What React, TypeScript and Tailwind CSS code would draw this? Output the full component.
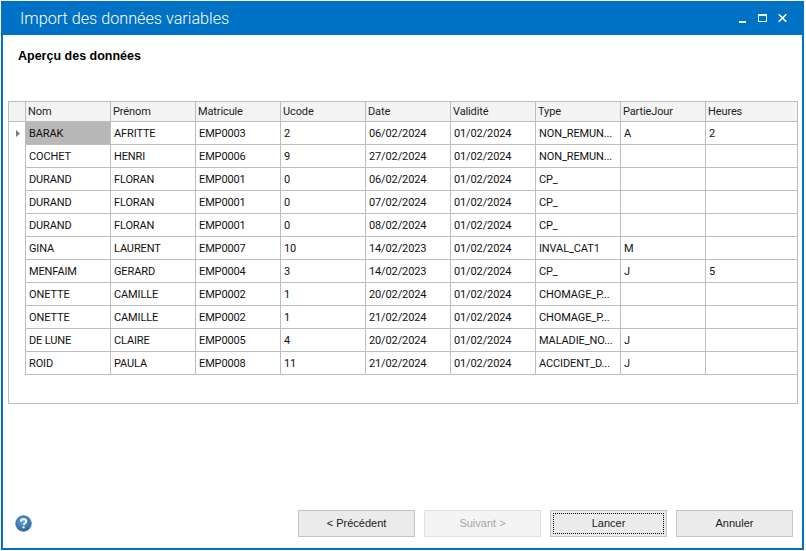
const columns = ["Nom", "Prénom", "Matricule", "Ucode", "Date", "Validité", "Type", "PartieJour", "Heures"];

const rows = [
  ["BARAK", "AFRITTE", "EMP0003", "2", "06/02/2024", "01/02/2024", "NON_REMUN...", "A", "2"],
  ["COCHET", "HENRI", "EMP0006", "9", "27/02/2024", "01/02/2024", "NON_REMUN...", "", ""],
  ["DURAND", "FLORAN", "EMP0001", "0", "06/02/2024", "01/02/2024", "CP_", "", ""],
  ["DURAND", "FLORAN", "EMP0001", "0", "07/02/2024", "01/02/2024", "CP_", "", ""],
  ["DURAND", "FLORAN", "EMP0001", "0", "08/02/2024", "01/02/2024", "CP_", "", ""],
  ["GINA", "LAURENT", "EMP0007", "10", "14/02/2023", "01/02/2024", "INVAL_CAT1", "M", ""],
  ["MENFAIM", "GERARD", "EMP0004", "3", "14/02/2023", "01/02/2024", "CP_", "J", "5"],
  ["ONETTE", "CAMILLE", "EMP0002", "1", "20/02/2024", "01/02/2024", "CHOMAGE_P...", "", ""],
  ["ONETTE", "CAMILLE", "EMP0002", "1", "21/02/2024", "01/02/2024", "CHOMAGE_P...", "", ""],
  ["DE LUNE", "CLAIRE", "EMP0005", "4", "20/02/2024", "01/02/2024", "MALADIE_NO...", "J", ""],
  ["ROID", "PAULA", "EMP0008", "11", "21/02/2024", "01/02/2024", "ACCIDENT_D...", "J", ""],
];

function HelpIcon() {
  return (
    <svg width="17" height="17" viewBox="0 0 17 17">
      <defs>
        <radialGradient id="help" cx="45%" cy="35%" r="70%">
          <stop offset="0%" stopColor="#6fa8dc" />
          <stop offset="100%" stopColor="#1d5f9c" />
        </radialGradient>
      </defs>
      <circle cx="8.5" cy="8.5" r="7.7" fill="url(#help)" stroke="#3d6f99" strokeWidth="1" />
      <path
        d="M5.9 6.6c0-1.5 1.1-2.4 2.7-2.4s2.6.9 2.6 2.1c0 1-.6 1.5-1.3 2-.6.4-.9.7-.9 1.4v.3"
        fill="none"
        stroke="#fff"
        strokeWidth="1.9"
      />
      <rect x="7.5" y="11.3" width="2" height="2" fill="#fff" />
    </svg>
  );
}

function WizardButton({ label, disabled, focused }: { label: string; disabled?: boolean; focused?: boolean }) {
  return (
    <button
      disabled={disabled}
      className={
        disabled
          ? "w-[117px] h-[27px] border border-[#e0e0e0] bg-[#f4f4f4] text-[#a8a8a8] text-[11px] flex items-center justify-center"
          : "w-[117px] h-[27px] border border-[#c4c4c4] bg-[#ebebeb] text-[#1a1a1a] text-[11px] flex items-center justify-center p-[2px]"
      }
    >
      {focused ? (
        <span className="w-full h-full border border-dotted border-black flex items-center justify-center">{label}</span>
      ) : (
        label
      )}
    </button>
  );
}

export default function App() {
  return (
    <div className="w-[806px] h-[551px] bg-white pt-px pl-px pr-[2px] pb-px font-['Liberation_Sans',sans-serif]">
      <div className="w-full h-full flex flex-col border-x-2 border-b-2 border-[#0072c6] bg-white">
        <div className="h-[34px] -mx-[2px] shrink-0 bg-[#0072c6] flex items-center justify-between pl-[19px] pr-[17px]">
          <span className="text-white text-[16.2px] font-light font-['Roboto',sans-serif] pt-[2px]">Import des données variables</span>
          <div className="flex items-center gap-[11px]">
            <svg width="8" height="8" viewBox="0 0 8 8" className="mt-[2px]">
              <rect x="0" y="6" width="7" height="2" fill="#fff" />
            </svg>
            <svg width="9" height="8" viewBox="0 0 9 8">
              <path d="M.5.5h8v7h-8z M0 1.5h9" fill="none" stroke="#fff" strokeWidth="1" />
            </svg>
            <svg width="9" height="8" viewBox="0 0 9 8">
              <path d="M.7.3l7.6 7.4M8.3.3L.7 7.7" fill="none" stroke="#fff" strokeWidth="1.6" />
            </svg>
          </div>
        </div>

        <h1 className="mt-[14px] ml-[15px] h-[15px] text-[12.5px] leading-[15px] font-bold text-black">Aperçu des données</h1>

        <div className="mt-[37px] ml-[5px] w-[790px] h-[303px] border border-[#bdbdbd] text-[11px] leading-none tracking-[-0.12px] text-[#111] font-['Roboto',sans-serif]">
          <div className="grid grid-cols-[17px_repeat(8,85px)_1fr] h-[20px] bg-[#f4f4f4] border-b border-[#bdbdbd]">
            <div className="border-r border-[#bdbdbd]" />
            {columns.map((column, c) => (
              <div
                key={column}
                className={c === 8 ? "pl-[2px] flex items-center text-[#222]" : "border-r border-[#bdbdbd] pl-[2px] flex items-center text-[#222]"}
              >
                {column}
              </div>
            ))}
          </div>
          {rows.map((row, r) => (
            <div key={r} className="grid grid-cols-[17px_repeat(8,85px)_1fr] h-[23px]">
              <div className="border-r border-[#bdbdbd] flex items-center justify-center">
                {r === 0 && (
                  <svg width="4" height="7" viewBox="0 0 4 7" className="ml-[1px]">
                    <path d="M0 0l4 3.5L0 7z" fill="#7a7a7a" />
                  </svg>
                )}
              </div>
              {row.map((cell, c) => (
                <div
                  key={c}
                  className={
                    r === 0 && c === 0
                      ? "border-r border-b border-[#bdbdbd] bg-[#b8b8b8] pl-[3px] flex items-center"
                      : c === 8
                        ? "border-b border-[#bdbdbd] pl-[3px] flex items-center"
                        : "border-r border-b border-[#bdbdbd] pl-[3px] flex items-center"
                  }
                >
                  {cell}
                </div>
              ))}
            </div>
          ))}
        </div>

        <div className="mt-auto mb-[11px] ml-[12px] mr-[9px] flex items-center">
          <HelpIcon />
          <div className="ml-auto flex items-center gap-[9px]">
            <WizardButton label="< Précédent" />
            <WizardButton label="Suivant >" disabled />
            <WizardButton label="Lancer" focused />
            <WizardButton label="Annuler" />
          </div>
        </div>
      </div>
    </div>
  );
}
